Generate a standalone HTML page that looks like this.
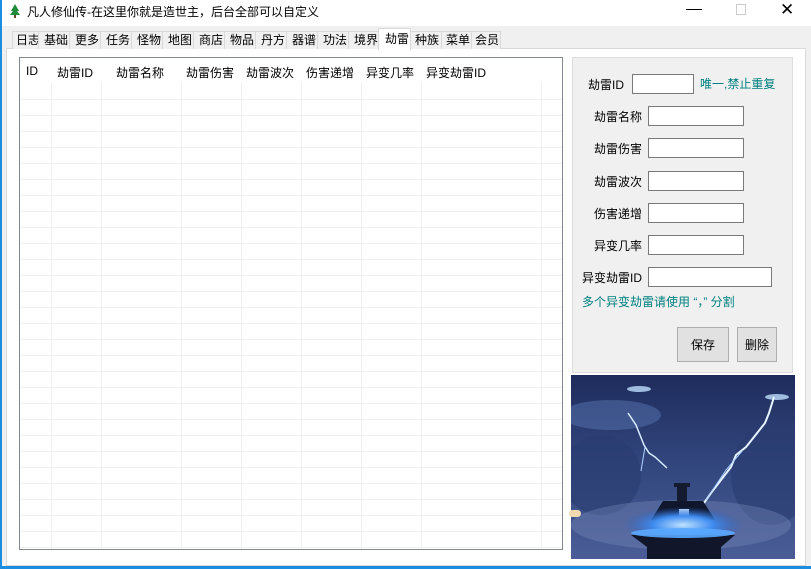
<!DOCTYPE html><html><head><meta charset="utf-8"><style>
*{margin:0;padding:0;box-sizing:border-box}
body{width:811px;height:569px;overflow:hidden;background:#f0f0f0;font-family:"Liberation Sans","Noto Sans CJK SC",sans-serif;font-size:12px;color:#000;position:relative}
.a{position:absolute;white-space:nowrap}
.tab{position:absolute;top:31px;height:18px;border:1px solid #d9d9d9;border-bottom:none;background:#f0f0f0;font-size:12px;line-height:16px;padding-left:4px;white-space:nowrap}
.in{position:absolute;background:#fff;border:1px solid #7a7a7a;height:20px}
.lb{position:absolute;font-size:12px;white-space:nowrap}
.btn{position:absolute;background:#e1e1e1;border:1px solid #adadad;font-size:12px;text-align:center;line-height:34px}
</style></head><body>
<div class="a" style="left:0;top:0;width:811px;height:26px;background:#fff"></div>
<div class="a" style="left:0;top:0;width:2px;height:569px;background:#1c8de0"></div>
<div class="a" style="left:0;top:566px;width:811px;height:3px;background:#1c8de0"></div>
<svg class="a" style="left:10px;top:4px" width="10" height="14"><polygon points="5,0 9,7 7,7 10,11 0,11 3,7 1,7" fill="#1f8a3a"/><rect x="4" y="11" width="2" height="3" fill="#6b4a2a"/></svg>
<div class="a" style="left:27px;top:3px;font-size:12px">凡人修仙传-在这里你就是造世主，后台全部可以自定义</div>
<div class="a" style="left:686px;top:9px;width:16px;height:1px;background:#000"></div>
<div class="a" style="left:736px;top:4px;width:10px;height:11px;border:1px solid #ccc"></div>
<div class="a" style="left:780px;top:0px;font-size:17px">✕</div>
<div class="a" style="left:6px;top:48px;width:800px;height:518px;background:#fff;border:1px solid #d9d9d9"></div>
<div class="tab" style="left:12px;width:27px;padding-left:3px">日志</div>
<div class="tab" style="left:38px;width:32px;padding-left:5px">基础</div>
<div class="tab" style="left:69px;width:32px;padding-left:5px">更多</div>
<div class="tab" style="left:100px;width:32px;padding-left:5px">任务</div>
<div class="tab" style="left:131px;width:32px;padding-left:5px">怪物</div>
<div class="tab" style="left:162px;width:32px;padding-left:5px">地图</div>
<div class="tab" style="left:193px;width:32px;padding-left:5px">商店</div>
<div class="tab" style="left:224px;width:32px;padding-left:5px">物品</div>
<div class="tab" style="left:255px;width:32px;padding-left:5px">丹方</div>
<div class="tab" style="left:286px;width:32px;padding-left:5px">器谱</div>
<div class="tab" style="left:317px;width:32px;padding-left:5px">功法</div>
<div class="tab" style="left:348px;width:31px;padding-left:5px">境界</div>
<div class="tab" style="left:378px;top:28px;height:22px;width:33px;background:#fff;line-height:20px;padding-left:6px">劫雷</div>
<div class="tab" style="left:410px;width:32px;padding-left:4px">种族</div>
<div class="tab" style="left:441px;width:31px;padding-left:4px">菜单</div>
<div class="tab" style="left:471px;width:30px;padding-left:3px">会员</div>
<div class="a" style="left:19px;top:57px;width:544px;height:493px;border:1px solid #828790;background:#fff;overflow:hidden">
<svg width="542" height="491" style="position:absolute;left:0;top:0">
<g stroke="#f0f0f0" stroke-width="1">
<line x1="0" y1="41.5" x2="542" y2="41.5"/><line x1="0" y1="57.5" x2="542" y2="57.5"/><line x1="0" y1="73.5" x2="542" y2="73.5"/><line x1="0" y1="89.5" x2="542" y2="89.5"/><line x1="0" y1="105.5" x2="542" y2="105.5"/><line x1="0" y1="121.5" x2="542" y2="121.5"/><line x1="0" y1="137.5" x2="542" y2="137.5"/><line x1="0" y1="153.5" x2="542" y2="153.5"/><line x1="0" y1="169.5" x2="542" y2="169.5"/><line x1="0" y1="185.5" x2="542" y2="185.5"/><line x1="0" y1="201.5" x2="542" y2="201.5"/><line x1="0" y1="217.5" x2="542" y2="217.5"/><line x1="0" y1="233.5" x2="542" y2="233.5"/><line x1="0" y1="249.5" x2="542" y2="249.5"/><line x1="0" y1="265.5" x2="542" y2="265.5"/><line x1="0" y1="281.5" x2="542" y2="281.5"/><line x1="0" y1="297.5" x2="542" y2="297.5"/><line x1="0" y1="313.5" x2="542" y2="313.5"/><line x1="0" y1="329.5" x2="542" y2="329.5"/><line x1="0" y1="345.5" x2="542" y2="345.5"/><line x1="0" y1="361.5" x2="542" y2="361.5"/><line x1="0" y1="377.5" x2="542" y2="377.5"/><line x1="0" y1="393.5" x2="542" y2="393.5"/><line x1="0" y1="409.5" x2="542" y2="409.5"/><line x1="0" y1="425.5" x2="542" y2="425.5"/><line x1="0" y1="441.5" x2="542" y2="441.5"/><line x1="0" y1="457.5" x2="542" y2="457.5"/><line x1="0" y1="473.5" x2="542" y2="473.5"/><line x1="0" y1="489.5" x2="542" y2="489.5"/>
<line x1="31.5" y1="0" x2="31.5" y2="491"/><line x1="81.5" y1="0" x2="81.5" y2="491"/><line x1="161.5" y1="0" x2="161.5" y2="491"/><line x1="221.5" y1="0" x2="221.5" y2="491"/><line x1="281.5" y1="0" x2="281.5" y2="491"/><line x1="341.5" y1="0" x2="341.5" y2="491"/><line x1="401.5" y1="0" x2="401.5" y2="491"/><line x1="521.5" y1="0" x2="521.5" y2="491"/>
</g></svg>
<div class="a" style="left:0;top:0;width:542px;height:25px;background:#fff"></div>
<div class="a" style="left:6px;top:6px">ID</div>
<div class="a" style="left:37px;top:6px">劫雷ID</div>
<div class="a" style="left:96px;top:6px">劫雷名称</div>
<div class="a" style="left:166px;top:6px">劫雷伤害</div>
<div class="a" style="left:226px;top:6px">劫雷波次</div>
<div class="a" style="left:286px;top:6px">伤害递增</div>
<div class="a" style="left:346px;top:6px">异变几率</div>
<div class="a" style="left:406px;top:6px">异变劫雷ID</div>
</div>
<div class="a" style="left:572px;top:57px;width:221px;height:316px;background:#f0f0f0;border:1px solid #dcdcdc"></div>
<div class="lb" style="left:588px;top:76px">劫雷ID</div>
<div class="in" style="left:632px;top:74px;width:62px"></div>
<div class="a" style="left:700px;top:75px;color:#008080">唯一,禁止重复</div>
<div class="lb" style="left:594px;top:108px">劫雷名称</div><div class="in" style="left:648px;top:106px;width:96px"></div>
<div class="lb" style="left:594px;top:140px">劫雷伤害</div><div class="in" style="left:648px;top:138px;width:96px"></div>
<div class="lb" style="left:594px;top:173px">劫雷波次</div><div class="in" style="left:648px;top:171px;width:96px"></div>
<div class="lb" style="left:594px;top:205px">伤害递增</div><div class="in" style="left:648px;top:203px;width:96px"></div>
<div class="lb" style="left:594px;top:237px">异变几率</div><div class="in" style="left:648px;top:235px;width:96px"></div>
<div class="lb" style="left:582px;top:269px">异变劫雷ID</div><div class="in" style="left:648px;top:267px;width:124px"></div>
<div class="a" style="left:582px;top:293px;color:#008080">多个异变劫雷请使用 “，” 分割</div>
<div class="btn" style="left:677px;top:327px;width:52px;height:35px">保存</div>
<div class="btn" style="left:737px;top:327px;width:40px;height:35px">删除</div>
<svg class="a" style="left:571px;top:375px" width="224" height="184">
<defs><linearGradient id="g" x1="0" y1="0" x2="0" y2="1"><stop offset="0" stop-color="#1e2c5c"/><stop offset=".5" stop-color="#33477f"/><stop offset="1" stop-color="#4a5d96"/></linearGradient>
<radialGradient id="r" cx=".5" cy=".5" r=".5"><stop offset="0" stop-color="#bfe2ff"/><stop offset=".5" stop-color="#3f8cf0"/><stop offset="1" stop-color="#2a60c0" stop-opacity="0"/></radialGradient></defs>
<rect width="224" height="184" fill="url(#g)"/>
<ellipse cx="40" cy="40" rx="50" ry="15" fill="#5873b0" opacity=".5"/>
<ellipse cx="30" cy="100" rx="40" ry="40" fill="#2a3c70" opacity=".6"/>
<ellipse cx="200" cy="100" rx="40" ry="50" fill="#2a3c70" opacity=".6"/>
<ellipse cx="110" cy="150" rx="110" ry="25" fill="#7d90c0" opacity=".35"/>
<ellipse cx="68" cy="14" rx="12" ry="3" fill="#bfe0ff" opacity=".8"/>
<ellipse cx="206" cy="22" rx="12" ry="3" fill="#bfe0ff" opacity=".8"/>
<polyline points="57,38 65,50 73,70 78,78 84,82 96,93" fill="none" stroke="#d8ecff" stroke-width="1.5"/>
<polyline points="74,72 70,96" fill="none" stroke="#b0d5ff" stroke-width="1"/>
<polyline points="203,22 198,38 194,48 183,62 175,72 165,80 160,92 150,105 140,118 133,128" fill="none" stroke="#e6f4ff" stroke-width="2"/>
<polyline points="172,75 155,95 145,110 135,125" fill="none" stroke="#a8d0ff" stroke-width="1"/>
<rect x="106" y="110" width="10" height="20" fill="#141a30"/>
<rect x="103" y="108" width="16" height="4" fill="#141a30"/>
<polygon points="80,145 92,126 132,126 144,145" fill="#10162c"/>
<rect x="108" y="134" width="10" height="10" fill="#cfe8ff"/>
<ellipse cx="112" cy="150" rx="60" ry="18" fill="url(#r)"/>
<polygon points="60,160 164,160 150,172 150,184 76,184 76,172" fill="#11162a"/>
<ellipse cx="112" cy="158" rx="52" ry="5" fill="#5aa8ff" opacity=".9"/>
</svg>
<div class="a" style="left:569px;top:510px;width:12px;height:7px;background:#f2d9b0;border-radius:4px"></div>
</body></html>
